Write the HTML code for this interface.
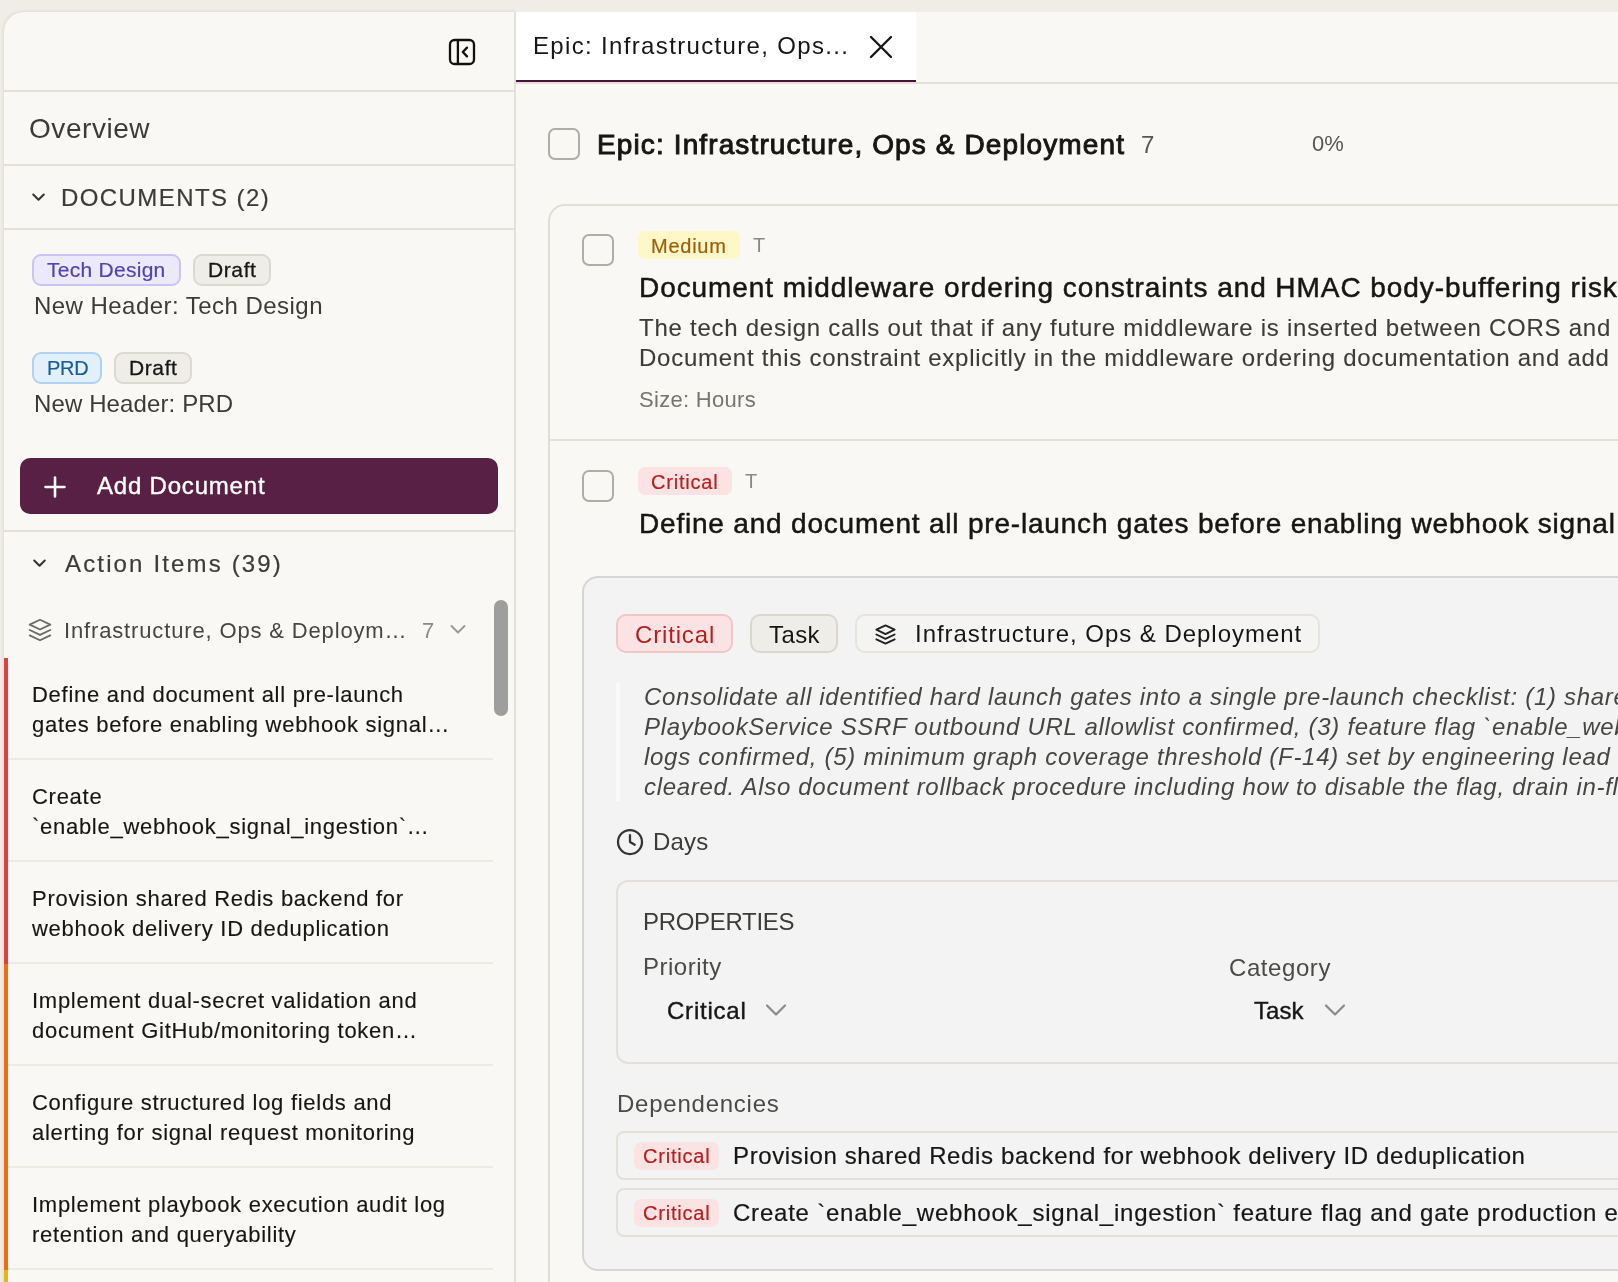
<!DOCTYPE html>
<html><head><meta charset="utf-8"><style>
html,body{margin:0;padding:0;width:1618px;height:1282px;overflow:hidden;background:#efede6}
body{position:relative;font-family:"Liberation Sans",sans-serif;}
.t{position:absolute;will-change:transform;}
.b{position:absolute;box-sizing:content-box;}
</style></head><body>
<div class="b" style="left:0px;top:0px;width:1618px;height:1282px;background:#efede6"></div>
<div class="b" style="left:4px;top:12px;width:512px;height:1290px;background:#f9f8f4;border-top-left-radius:20px;box-shadow:-1px -1px 3px rgba(0,0,0,0.07)"></div>
<div class="b" style="left:516px;top:12px;width:1110px;height:1290px;background:#f9f8f4"></div>
<div class="b" style="left:514px;top:12px;width:2px;height:1282px;background:#e2e0d8"></div>
<div class="b" style="left:4px;top:90px;width:510px;height:2px;background:#e2e0d8"></div>
<div class="b" style="left:4px;top:164px;width:510px;height:2px;background:#e2e0d8"></div>
<div class="b" style="left:4px;top:228px;width:510px;height:2px;background:#e2e0d8"></div>
<div class="b" style="left:4px;top:530px;width:510px;height:2px;background:#e2e0d8"></div>
<svg class="b" style="left:445px;top:35px;" width="34" height="34" viewBox="0 0 34 34" fill="none"><rect x="5" y="5" width="24" height="24" rx="4.5" stroke="#111" stroke-width="2.3"/><line x1="12.9" y1="4" x2="12.9" y2="30" stroke="#111" stroke-width="2.3"/><path d="M22 12.6 L17.8 17 L22 21.4" stroke="#111" stroke-width="2.3" stroke-linecap="round" stroke-linejoin="round"/></svg>
<div class="t" style="left:29px;top:110.80px;font-size:28px;line-height:35px;white-space:nowrap;color:#3b3b38;letter-spacing:0.55px">Overview</div>
<svg class="b" style="left:30px;top:190px;" width="18" height="14" viewBox="0 0 18 14" fill="none"><path d="M3.2 4.5 L8.5 9.8 L13.8 4.5" stroke="#333" stroke-width="2" stroke-linecap="round" stroke-linejoin="round"/></svg>
<div class="t" style="left:61px;top:182.68px;font-size:24px;line-height:30px;white-space:nowrap;-webkit-text-stroke:0.2px currentColor;color:#3b3b38;letter-spacing:1.42px">DOCUMENTS (2)</div>
<div class="b" style="left:32px;top:254px;width:145px;height:28px;background:#ece9fc;border:2px solid #cbc3f3;border-radius:9px"></div>
<div class="t" style="left:47px;top:256.72px;font-size:21px;line-height:26px;white-space:nowrap;-webkit-text-stroke:0.2px currentColor;color:#5643ab;letter-spacing:0.27px">Tech Design</div>
<div class="b" style="left:193px;top:254px;width:74px;height:28px;background:#efede7;border:2px solid #dcd9d0;border-radius:9px"></div>
<div class="t" style="left:207.5px;top:256.72px;font-size:21px;line-height:26px;white-space:nowrap;-webkit-text-stroke:0.3px currentColor;color:#161615;letter-spacing:0.6px">Draft</div>
<div class="t" style="left:33.5px;top:290.68px;font-size:24px;line-height:30px;white-space:nowrap;color:#3b3b38;letter-spacing:0.46px">New Header: Tech Design</div>
<div class="b" style="left:32px;top:352px;width:66px;height:28px;background:#e2f0fc;border:2px solid #acd3f3;border-radius:9px"></div>
<div class="t" style="left:46.5px;top:355.57px;font-size:20px;line-height:25px;white-space:nowrap;-webkit-text-stroke:0.2px currentColor;color:#1a5c9a;letter-spacing:-0.3px">PRD</div>
<div class="b" style="left:114px;top:352px;width:74px;height:28px;background:#efede7;border:2px solid #dcd9d0;border-radius:9px"></div>
<div class="t" style="left:128.5px;top:354.72px;font-size:21px;line-height:26px;white-space:nowrap;-webkit-text-stroke:0.3px currentColor;color:#161615;letter-spacing:0.6px">Draft</div>
<div class="t" style="left:33.5px;top:388.68px;font-size:24px;line-height:30px;white-space:nowrap;color:#3b3b38;letter-spacing:0.12px">New Header: PRD</div>
<div class="b" style="left:20px;top:458px;width:478px;height:56px;background:#582045;border-radius:10px"></div>
<svg class="b" style="left:42px;top:474px;" width="26" height="26" viewBox="0 0 26 26" fill="none"><path d="M13 3.5 V22.5 M3.5 13 H22.5" stroke="#fff" stroke-width="2.6" stroke-linecap="round"/></svg>
<div class="t" style="left:97px;top:470.68px;font-size:24px;line-height:30px;white-space:nowrap;-webkit-text-stroke:0.4px currentColor;color:#fff;letter-spacing:0.8px">Add Document</div>
<svg class="b" style="left:31px;top:556px;" width="18" height="14" viewBox="0 0 18 14" fill="none"><path d="M3.2 4.5 L8.5 9.8 L13.8 4.5" stroke="#333" stroke-width="2" stroke-linecap="round" stroke-linejoin="round"/></svg>
<div class="t" style="left:65px;top:548.98px;font-size:24px;line-height:30px;white-space:nowrap;-webkit-text-stroke:0.2px currentColor;color:#3b3b38;letter-spacing:2.15px">Action Items (39)</div>
<svg class="b" style="left:27px;top:617px;" width="26" height="26" viewBox="0 0 24 24" fill="none"><path d="M12 2.5 L21.5 7 L12 11.5 L2.5 7 Z" stroke="#6a6a66" stroke-width="1.7" stroke-linejoin="round"/><path d="M2.5 12 L12 16.5 L21.5 12" stroke="#6a6a66" stroke-width="1.7" stroke-linecap="round" stroke-linejoin="round"/><path d="M2.5 17 L12 21.5 L21.5 17" stroke="#6a6a66" stroke-width="1.7" stroke-linecap="round" stroke-linejoin="round"/></svg>
<div class="t" style="left:64.3px;top:617.38px;font-size:22px;line-height:28px;white-space:nowrap;color:#454542;letter-spacing:0.85px">Infrastructure, Ops &amp; Deploym…</div>
<div class="t" style="left:422px;top:617.38px;font-size:22px;line-height:28px;white-space:nowrap;color:#8a8984">7</div>
<svg class="b" style="left:448px;top:622px;" width="20" height="14" viewBox="0 0 20 14" fill="none"><path d="M3.5 4 L10 10.5 L16.5 4" stroke="#9a9995" stroke-width="2" stroke-linecap="round" stroke-linejoin="round"/></svg>
<div class="b" style="left:494px;top:600px;width:14px;height:116px;background:#9e9e9e;border-radius:7px"></div>
<div class="b" style="left:4px;top:658px;width:4px;height:102px;background:#e03f3f"></div>
<div class="t" style="left:32.3px;top:679.98px;font-size:22px;line-height:30px;white-space:nowrap;-webkit-text-stroke:0.15px currentColor;color:#161615;letter-spacing:0.72px">Define and document all pre-launch<br>gates before enabling webhook signal…</div>
<div class="b" style="left:8px;top:758px;width:485px;height:2px;background:#eceae3"></div>
<div class="b" style="left:4px;top:760px;width:4px;height:102px;background:#e03f3f"></div>
<div class="t" style="left:32.3px;top:781.98px;font-size:22px;line-height:30px;white-space:nowrap;-webkit-text-stroke:0.15px currentColor;color:#161615;letter-spacing:0.72px">Create<br>`enable_webhook_signal_ingestion`…</div>
<div class="b" style="left:8px;top:860px;width:485px;height:2px;background:#eceae3"></div>
<div class="b" style="left:4px;top:862px;width:4px;height:102px;background:#e03f3f"></div>
<div class="t" style="left:32.3px;top:883.98px;font-size:22px;line-height:30px;white-space:nowrap;-webkit-text-stroke:0.15px currentColor;color:#161615;letter-spacing:0.72px">Provision shared Redis backend for<br>webhook delivery ID deduplication</div>
<div class="b" style="left:8px;top:962px;width:485px;height:2px;background:#eceae3"></div>
<div class="b" style="left:4px;top:964px;width:4px;height:102px;background:#ef6f10"></div>
<div class="t" style="left:32.3px;top:985.98px;font-size:22px;line-height:30px;white-space:nowrap;-webkit-text-stroke:0.15px currentColor;color:#161615;letter-spacing:0.72px">Implement dual-secret validation and<br>document GitHub/monitoring token…</div>
<div class="b" style="left:8px;top:1064px;width:485px;height:2px;background:#eceae3"></div>
<div class="b" style="left:4px;top:1066px;width:4px;height:102px;background:#ef6f10"></div>
<div class="t" style="left:32.3px;top:1087.98px;font-size:22px;line-height:30px;white-space:nowrap;-webkit-text-stroke:0.15px currentColor;color:#161615;letter-spacing:0.72px">Configure structured log fields and<br>alerting for signal request monitoring</div>
<div class="b" style="left:8px;top:1166px;width:485px;height:2px;background:#eceae3"></div>
<div class="b" style="left:4px;top:1168px;width:4px;height:102px;background:#ef6f10"></div>
<div class="t" style="left:32.3px;top:1189.98px;font-size:22px;line-height:30px;white-space:nowrap;-webkit-text-stroke:0.15px currentColor;color:#161615;letter-spacing:0.72px">Implement playbook execution audit log<br>retention and queryability</div>
<div class="b" style="left:8px;top:1268px;width:485px;height:2px;background:#eceae3"></div>
<div class="b" style="left:4px;top:1270px;width:4px;height:102px;background:#e8b512"></div>
<div class="b" style="left:516px;top:12px;width:400px;height:70px;background:#fff"></div>
<div class="b" style="left:516px;top:80px;width:400px;height:2px;background:#4b1139"></div>
<div class="b" style="left:916px;top:82px;width:710px;height:2px;background:#e2e0d8"></div>
<div class="b" style="left:516px;top:82px;width:400px;height:2px;background:#e2e0d8"></div>
<div class="t" style="left:533px;top:31.18px;font-size:24px;line-height:30px;white-space:nowrap;color:#161615;letter-spacing:1.34px">Epic: Infrastructure, Ops...</div>
<svg class="b" style="left:866px;top:32px;" width="30" height="30" viewBox="0 0 30 30" fill="none"><path d="M5 5 L25 25 M25 5 L5 25" stroke="#151515" stroke-width="2.3" stroke-linecap="round"/></svg>
<div class="b" style="left:548px;top:128px;width:28px;height:28px;border:2px solid #aeada7;border-radius:7px"></div>
<div class="t" style="left:597px;top:126.80px;font-size:28px;line-height:35px;white-space:nowrap;-webkit-text-stroke:0.95px currentColor;color:#161615;letter-spacing:1.12px">Epic: Infrastructure, Ops &amp; Deployment</div>
<div class="t" style="left:1141px;top:129.68px;font-size:24px;line-height:30px;white-space:nowrap;color:#555552">7</div>
<div class="t" style="left:1311.5px;top:130.38px;font-size:22px;line-height:28px;white-space:nowrap;color:#555552">0%</div>
<div class="b" style="left:548px;top:204px;width:1100px;height:1200px;border:2px solid #e1dfd5;border-radius:17px;"></div>
<div class="b" style="left:582px;top:234px;width:28px;height:28px;border:2px solid #aeada7;border-radius:7px"></div>
<div class="b" style="left:638px;top:231px;width:102px;height:28px;background:#fef7c7;border-radius:7px"></div>
<div class="t" style="left:650.8px;top:233.87px;font-size:20px;line-height:25px;white-space:nowrap;-webkit-text-stroke:0.2px currentColor;color:#9a600c;letter-spacing:0.75px">Medium</div>
<div class="t" style="left:753px;top:233.07px;font-size:20px;line-height:25px;white-space:nowrap;color:#8a8984">T</div>
<div class="t" style="left:638.5px;top:270.30px;font-size:28px;line-height:35px;white-space:nowrap;-webkit-text-stroke:0.5px currentColor;color:#161615;letter-spacing:0.93px">Document middleware ordering constraints and HMAC body-buffering risk</div>
<div class="t" style="left:639px;top:312.68px;font-size:24px;line-height:30px;white-space:nowrap;-webkit-text-stroke:0.1px currentColor;color:#3b3b38;letter-spacing:0.74px">The tech design calls out that if any future middleware is inserted between CORS and auth, HMAC validation may break.<br>Document this constraint explicitly in the middleware ordering documentation and add a regression test.</div>
<div class="t" style="left:639px;top:386.08px;font-size:22px;line-height:28px;white-space:nowrap;color:#767570;letter-spacing:0.3px">Size: Hours</div>
<div class="b" style="left:550px;top:439px;width:1080px;height:2px;background:#e2e0d8"></div>
<div class="b" style="left:582px;top:470px;width:28px;height:28px;border:2px solid #aeada7;border-radius:7px"></div>
<div class="b" style="left:638px;top:467px;width:94px;height:28px;background:#fce3e3;border-radius:7px"></div>
<div class="t" style="left:650.8px;top:469.87px;font-size:20px;line-height:25px;white-space:nowrap;-webkit-text-stroke:0.2px currentColor;color:#b41f1f;letter-spacing:0.8px">Critical</div>
<div class="t" style="left:745px;top:469.07px;font-size:20px;line-height:25px;white-space:nowrap;color:#8a8984">T</div>
<div class="t" style="left:638.5px;top:506.40px;font-size:28px;line-height:35px;white-space:nowrap;-webkit-text-stroke:0.5px currentColor;color:#161615;letter-spacing:0.8px">Define and document all pre-launch gates before enabling webhook signal ingestion</div>
<div class="b" style="left:582px;top:576px;width:1100px;height:691px;background:#f3f3f3;border:2px solid #d5d5d7;border-radius:16px"></div>
<div class="b" style="left:616px;top:614px;width:113px;height:35px;background:#fce3e3;border:2px solid #f1c6c6;border-radius:10px"></div>
<div class="t" style="left:634.7px;top:619.98px;font-size:24px;line-height:30px;white-space:nowrap;color:#b41f1f;letter-spacing:0.84px">Critical</div>
<div class="b" style="left:750px;top:614px;width:84px;height:35px;background:#efede7;border:2px solid #dad7ce;border-radius:10px"></div>
<div class="t" style="left:769.4px;top:619.98px;font-size:24px;line-height:30px;white-space:nowrap;color:#161615;letter-spacing:0.4px">Task</div>
<div class="b" style="left:855px;top:614px;width:461px;height:35px;background:#f4f4f2;border:2px solid #e6e4dd;border-radius:10px"></div>
<svg class="b" style="left:874px;top:623px;" width="23" height="23" viewBox="0 0 24 24" fill="none"><path d="M12 2.5 L21.5 7 L12 11.5 L2.5 7 Z" stroke="#222" stroke-width="2.0" stroke-linejoin="round"/><path d="M2.5 12 L12 16.5 L21.5 12" stroke="#222" stroke-width="2.0" stroke-linecap="round" stroke-linejoin="round"/><path d="M2.5 17 L12 21.5 L21.5 17" stroke="#222" stroke-width="2.0" stroke-linecap="round" stroke-linejoin="round"/></svg>
<div class="t" style="left:914.6px;top:619.28px;font-size:24px;line-height:30px;white-space:nowrap;color:#161615;letter-spacing:0.97px">Infrastructure, Ops &amp; Deployment</div>
<div class="b" style="left:616px;top:683px;width:4px;height:118px;background:#fafaf8"></div>
<div class="t" style="left:644px;top:682.38px;font-size:24px;line-height:30px;white-space:nowrap;color:#454542;font-style:italic;letter-spacing:0.7px">Consolidate all identified hard launch gates into a single pre-launch checklist: (1) shared Redis backend provisioned, (2)<br>PlaybookService SSRF outbound URL allowlist confirmed, (3) feature flag `enable_webhook_signal_ingestion` created, (4) audit<br>logs confirmed, (5) minimum graph coverage threshold (F-14) set by engineering lead and reviewed, (6) security review<br>cleared. Also document rollback procedure including how to disable the flag, drain in-flight requests.</div>
<svg class="b" style="left:615px;top:827px;" width="30" height="30" viewBox="0 0 24 24" fill="none"><circle cx="12" cy="12" r="9.6" stroke="#333" stroke-width="1.8"/><path d="M12 6.5 V12 L15.8 14.2" stroke="#333" stroke-width="1.8" stroke-linecap="round" stroke-linejoin="round"/></svg>
<div class="t" style="left:652.7px;top:826.68px;font-size:24px;line-height:30px;white-space:nowrap;color:#3b3b38;letter-spacing:0.2px">Days</div>
<div class="b" style="left:616px;top:880px;width:1100px;height:180px;border:2px solid #e2e0d8;border-radius:12px"></div>
<div class="t" style="left:643px;top:906.78px;font-size:24px;line-height:30px;white-space:nowrap;color:#3b3b38;letter-spacing:-0.3px">PROPERTIES</div>
<div class="t" style="left:643px;top:952.48px;font-size:24px;line-height:30px;white-space:nowrap;color:#4a4a46;letter-spacing:0.5px">Priority</div>
<div class="t" style="left:666.7px;top:995.68px;font-size:24px;line-height:30px;white-space:nowrap;-webkit-text-stroke:0.4px currentColor;color:#161615;letter-spacing:0.78px">Critical</div>
<svg class="b" style="left:763px;top:1001px;" width="26" height="18" viewBox="0 0 26 18" fill="none"><path d="M4 4.5 L13 13.5 L22 4.5" stroke="#8a8a88" stroke-width="2.2" stroke-linecap="round" stroke-linejoin="round"/></svg>
<div class="t" style="left:1228.8px;top:953.08px;font-size:24px;line-height:30px;white-space:nowrap;color:#4a4a46;letter-spacing:0.58px">Category</div>
<div class="t" style="left:1253.8px;top:995.68px;font-size:24px;line-height:30px;white-space:nowrap;-webkit-text-stroke:0.4px currentColor;color:#161615;letter-spacing:0.05px">Task</div>
<svg class="b" style="left:1321.5px;top:1001px;" width="26" height="18" viewBox="0 0 26 18" fill="none"><path d="M4 4.5 L13 13.5 L22 4.5" stroke="#8a8a88" stroke-width="2.2" stroke-linecap="round" stroke-linejoin="round"/></svg>
<div class="t" style="left:616.7px;top:1088.98px;font-size:24px;line-height:30px;white-space:nowrap;color:#4a4a46;letter-spacing:0.76px">Dependencies</div>
<div class="b" style="left:616px;top:1131px;width:1100px;height:45px;border:2px solid #e2e0d8;border-radius:8px"></div>
<div class="b" style="left:634px;top:1141.5px;width:85px;height:28px;background:#fce3e3;border-radius:7px"></div>
<div class="t" style="left:642.7px;top:1143.87px;font-size:20px;line-height:25px;white-space:nowrap;-webkit-text-stroke:0.2px currentColor;color:#b41f1f;letter-spacing:0.8px">Critical</div>
<div class="t" style="left:732.8px;top:1140.88px;font-size:24px;line-height:30px;white-space:nowrap;-webkit-text-stroke:0.2px currentColor;color:#161615;letter-spacing:0.63px">Provision shared Redis backend for webhook delivery ID deduplication</div>
<div class="b" style="left:616px;top:1188px;width:1100px;height:45px;border:2px solid #e2e0d8;border-radius:8px"></div>
<div class="b" style="left:634px;top:1198.5px;width:85px;height:28px;background:#fce3e3;border-radius:7px"></div>
<div class="t" style="left:642.7px;top:1200.87px;font-size:20px;line-height:25px;white-space:nowrap;-webkit-text-stroke:0.2px currentColor;color:#b41f1f;letter-spacing:0.8px">Critical</div>
<div class="t" style="left:732.8px;top:1197.88px;font-size:24px;line-height:30px;white-space:nowrap;-webkit-text-stroke:0.2px currentColor;color:#161615;letter-spacing:0.78px">Create `enable_webhook_signal_ingestion` feature flag and gate production endpoint</div>

</body></html>
